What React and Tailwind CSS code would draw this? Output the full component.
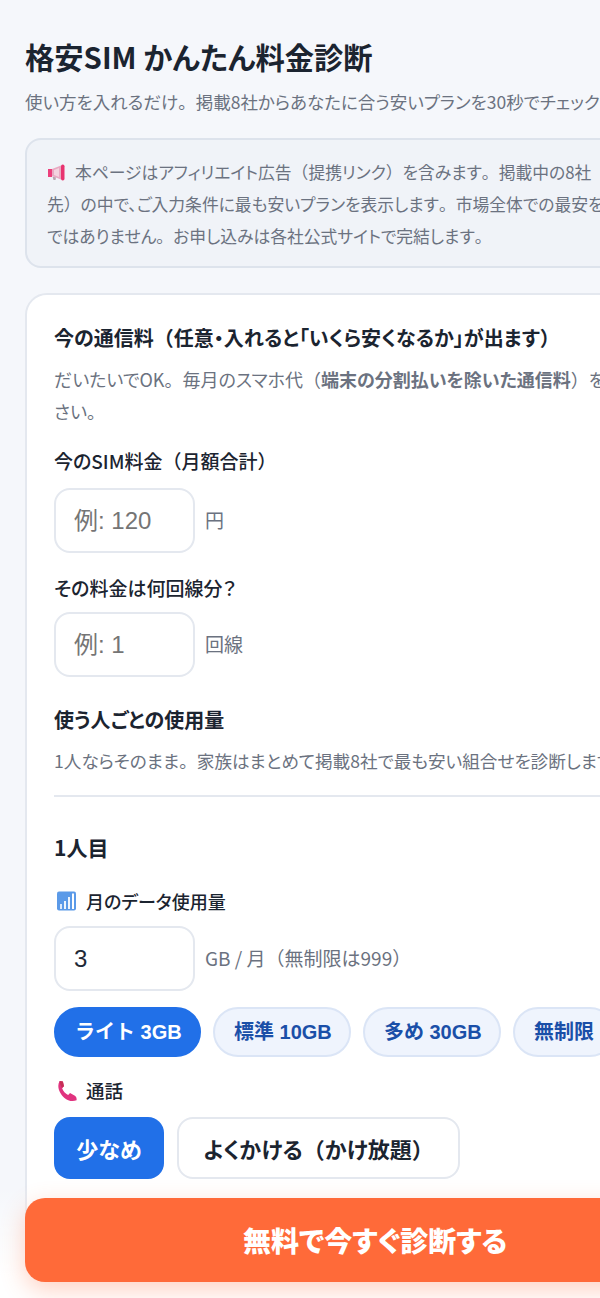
const FONT = "font-['Noto_Sans_CJK_JP','Noto_Sans',sans-serif] [font-feature-settings:'palt']";
const UI_FONT = "font-['Liberation_Sans','Noto_Sans_CJK_JP',sans-serif]";

// 括弧と句点だけ全角幅のまま出す
function Jp({ children }) {
  return children.split(/([（）。])/).map((part, i) =>
    i % 2 === 1 ? (
      <span key={i} className="[font-feature-settings:normal]">{part}</span>
    ) : (
      part
    )
  );
}

function MegaphoneIcon() {
  return (
    <svg width="19" height="19" viewBox="0 0 19 19" className="mr-[9px] inline-block align-[-3px]">
      <rect x="1" y="6" width="4" height="8" fill="#ec3f7c" />
      <path d="M5 6 L14 2.5 V16.5 L5 13 Z" fill="#e9a9c2" />
      <path d="M7 7 L12 5 V14 L7 12 Z" fill="#f3d3df" />
      <rect x="14" y="1.5" width="3.5" height="16" rx="1.7" fill="#e8336f" />
      <path d="M5.5 13.5 L9 14.5 L8.5 17 L6.5 17 Z" fill="#b9a6b0" />
    </svg>
  );
}

function ChartIcon() {
  return (
    <svg width="19" height="20" viewBox="0 0 19 20" className="shrink-0">
      <rect x="0" y="0.5" width="19" height="19" rx="2" fill="#5b9ae8" />
      <rect x="3" y="13" width="2" height="5" fill="#dbe9fb" />
      <rect x="7" y="10" width="2" height="8" fill="#eef5fd" />
      <rect x="11" y="6" width="2" height="12" fill="#eef5fd" />
      <rect x="15" y="2.5" width="2" height="15.5" fill="#ffffff" />
    </svg>
  );
}

function PhoneIcon() {
  return (
    <svg width="20" height="22" viewBox="0 0 19 20" className="shrink-0">
      <path
        d="M2.5 0.6 L5.6 0.9 L6.6 5.6 L4.8 7.1 C5.7 10 8 12.6 10.6 13.7 L12.4 12 L17 14.6 C18.4 15.6 18.8 17 18.6 18.8 C15 20.2 10.5 19.6 6.8 16.3 C2.5 12.5 -0.6 5.8 2.5 0.6 Z"
        fill="#e0337f"
      />
      <path d="M2.5 0.6 L5.6 0.9 L6.6 5.6 L4.8 7.1 C3.5 5 2.6 3 2.5 0.6 Z" fill="#c62f55" />
    </svg>
  );
}

function NumberField({ placeholder, value, unit }) {
  return (
    <div className="flex items-center gap-[10px]">
      <input
        readOnly
        placeholder={placeholder}
        value={value}
        className={`${UI_FONT} box-border h-[65px] w-[141px] rounded-[16px] border-2 border-[#e4e8ef] bg-white pl-[18px] text-[24px] text-[#1f2937] outline-none placeholder:text-[#757575]`}
      />
      <span className="text-[19px] text-[#6b7280]">
        <Jp>{unit}</Jp>
      </span>
    </div>
  );
}

function PlanChip({ label, active, className }) {
  return (
    <button
      className={`${UI_FONT} ${className} h-[50px] shrink-0 whitespace-nowrap rounded-full border-2 px-[19px] text-[20px] font-bold ${
        active
          ? "border-[#2170e8] bg-[#2170e8] text-white"
          : "border-[#dbe5f6] bg-[#eff4fd] text-[#1a4fa8]"
      }`}
    >
      {label}
    </button>
  );
}

export default function App() {
  return (
    <div className={`${FONT} relative h-[1298px] w-[600px] overflow-hidden bg-[#f5f7fb] text-[#1f2937]`}>
      <div className="w-[750px] px-[25px] pt-[36px]">
        <h1 className="text-[29.3px] font-bold leading-[40px] text-[#1b2430]">格安SIM かんたん料金診断</h1>
        <p className="mt-[13px] whitespace-nowrap text-[17.5px] leading-[26px] text-[#6b7280]">
          <Jp>使い方を入れるだけ。掲載8社からあなたに合う安いプランを30秒でチェックできます。</Jp>
        </p>

        <div className="mt-[23px] h-[130px] whitespace-nowrap rounded-[16px] border-2 border-[#dde3ec] bg-[#f0f3f8] py-[16px] pl-[20px] pr-[20px] text-[16.8px] leading-[32px] text-[#6b7280]">
          <MegaphoneIcon /><Jp>本ページはアフィリエイト広告（提携リンク）を含みます。掲載中の8社（提携</Jp>
          <br />
          <Jp>先）の中で、ご入力条件に最も安いプランを表示します。市場全体での最安を保証するもの</Jp>
          <br />
          <Jp>ではありません。お申し込みは各社公式サイトで完結します。</Jp>
        </div>

        <div className="mt-[25px] h-[1100px] rounded-[22px] border-2 border-[#e4e8ef] bg-white px-[27px] pt-[27px]">
          <h2 className="text-[20px] font-bold leading-[32px] text-[#1b2430]">
            <Jp>今の通信料（任意・入れると「いくら安くなるか」が出ます）</Jp>
          </h2>
          <p className="mt-[9px] text-[18px] leading-[32px] text-[#6b7280]">
            <Jp>だいたいでOK。毎月のスマホ代（</Jp>
            <strong className="font-bold">端末の分割払いを除いた通信料</strong>
            <Jp>）を入れてください。</Jp>
          </p>

          <label className="mt-[20px] block text-[19px] font-medium leading-[28px] text-[#1b2430]">
            <Jp>今のSIM料金（月額合計）</Jp>
          </label>
          <div className="mt-[13px]">
            <NumberField placeholder="例: 120" value="" unit="円" />
          </div>

          <label className="mt-[21px] block text-[19px] font-medium leading-[28px] text-[#1b2430]">その料金は何回線分？</label>
          <div className="mt-[10px]">
            <NumberField placeholder="例: 1" value="" unit="回線" />
          </div>

          <h3 className="mt-[28px] text-[20px] font-bold leading-[30px] text-[#1b2430]">使う人ごとの使用量</h3>
          <p className="mt-[11px] whitespace-nowrap text-[17.6px] leading-[30px] text-[#6b7280]">
            <Jp>1人ならそのまま。家族はまとめて掲載8社で最も安い組合せを診断します。</Jp>
          </p>
          <div className="mt-[19px] h-[2px] bg-[#e4e8ef]" />

          <h3 className="mt-[34px] text-[21px] font-semibold leading-[32px] text-[#1b2430]">1人目</h3>

          <div className="mt-[26px] flex h-[24px] items-center gap-[10px] pl-[3px] text-[18px] font-medium text-[#1b2430]">
            <ChartIcon />
            月のデータ使用量
          </div>
          <div className="mt-[13px]">
            <NumberField placeholder="" value="3" unit="GB / 月（無制限は999）" />
          </div>

          <div className="mt-[16px] flex gap-[12px]">
            <PlanChip label="ライト 3GB" active className="w-[147px] px-0 [font-feature-settings:normal]" />
            <PlanChip label="標準 10GB" className="w-[138px]" />
            <PlanChip label="多め 30GB" className="w-[138px]" />
            <PlanChip label="無制限" />
          </div>

          <div className="mt-[22px] flex h-[24px] items-center gap-[9px] pl-[3px] text-[18.5px] font-medium text-[#1b2430]">
            <PhoneIcon />
            通話
          </div>
          <div className="mt-[14px] flex gap-[13px]">
            <button className="h-[62px] w-[110px] rounded-[16px] bg-[#2170e8] text-[22px] font-bold text-white">少なめ</button>
            <button className="h-[62px] w-[283px] rounded-[16px] border-2 border-[#e4e8ef] bg-white text-[22px] font-bold text-[#1b2430]">
              <Jp>よくかける（かけ放題）</Jp>
            </button>
          </div>
        </div>
      </div>

      {/* 画面下に固定の診断ボタン。後ろは白へフェード */}
      <div className="absolute inset-x-0 bottom-0 h-[112px] bg-linear-to-b from-transparent to-white to-[80%]" />
      <button className="absolute left-[25px] top-[1198px] h-[84px] w-[700px] rounded-[20px] bg-[#ff6a39] text-[28px] font-black text-white shadow-[0_8px_24px_rgba(255,106,57,0.3)]">
        無料で今すぐ診断する
      </button>
    </div>
  );
}
